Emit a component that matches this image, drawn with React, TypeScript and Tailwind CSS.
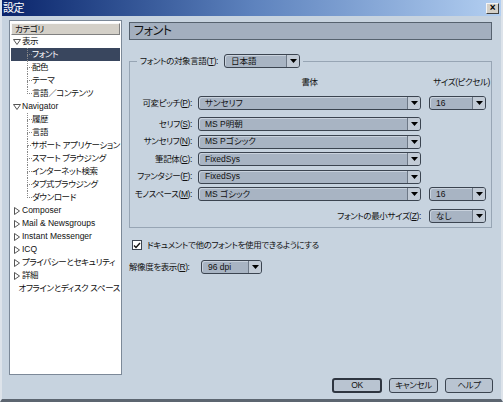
const FONT = "[font-family:'Liberation_Sans','Noto_Sans_CJK_JP',sans-serif] [font-feature-settings:'palt'] tracking-[-0.4px]";

function Arrow() {
  return (
    <svg width="7" height="4" viewBox="0 0 7 4" aria-hidden="true">
      <polygon points="0,0 7,0 3.5,4" fill="#000" />
    </svg>
  );
}

function Combo({ text, width }: { text: string; width: string }) {
  return (
    <div
      className={`${width} h-[14px] flex shrink-0 rounded-[3px] border border-[#3b4450] bg-[#a8b4c3] shadow-[inset_1px_1px_0_#c9d2dd] overflow-hidden`}
    >
      <div className="flex-1 flex items-center pl-[6px] text-[8.5px] text-[#111] whitespace-nowrap leading-none tracking-normal">
        {text}
      </div>
      <div className="w-[13px] flex items-center justify-center border-l border-[#6d7886] bg-[#c2cbd6]">
        <Arrow />
      </div>
    </div>
  );
}

function Btn({ label, width, primary }: { label: string; width: string; primary?: boolean }) {
  return (
    <div
      className={`${width} h-[15px] flex items-center justify-center rounded-[3px] bg-[#b9c4d1] text-[8.5px] leading-none text-[#111] ${
        primary ? "border-2 border-[#2e3540]" : "border border-[#3b4450]"
      }`}
    >
      {label}
    </div>
  );
}

function Tri({ open }: { open: boolean }) {
  return open ? (
    <svg width="8" height="6" viewBox="0 0 8 6" aria-hidden="true">
      <polygon points="0.5,0.5 7.5,0.5 4,5.5" fill="#fff" stroke="#555" strokeWidth="1" />
    </svg>
  ) : (
    <svg width="6" height="8" viewBox="0 0 6 8" aria-hidden="true">
      <polygon points="0.5,0.5 5.5,4 0.5,7.5" fill="#fff" stroke="#555" strokeWidth="1" />
    </svg>
  );
}

function TopItem({ label, open, plain, latin }: { label: string; open?: boolean; plain?: boolean; latin?: boolean }) {
  return (
    <div className="h-[13px] flex items-center pl-[1px] text-[8.5px] leading-none text-[#111] whitespace-nowrap">
      <div className="w-[9px] flex items-center justify-center">{plain ? null : <Tri open={!!open} />}</div>
      <span className={`ml-[1px] ${latin ? "tracking-normal" : ""}`}>{label}</span>
    </div>
  );
}

function Child({ label, last, selected }: { label: string; last?: boolean; selected?: boolean }) {
  return (
    <div
      className={`h-[13px] flex items-stretch text-[8.5px] leading-none whitespace-nowrap ${
        selected ? "bg-[#39465e] text-white" : "text-[#111]"
      }`}
    >
      <div className="ml-[16px] w-[5px] flex flex-col">
        <div className="flex-1 border-l border-b border-dotted border-[#888]" />
        <div className={`flex-1 ${last ? "" : "border-l border-dotted border-[#888]"}`} />
      </div>
      <span className="self-center">{label}</span>
    </div>
  );
}

function Label({ text, mn }: { text: string; mn: string }) {
  return (
    <>
      {text}(<u>{mn}</u>):
    </>
  );
}

function FontRow({ label, mn, value, size }: { label: string; mn: string; value: string; size?: string }) {
  return (
    <div className="h-[14px] flex items-center">
      <div className="w-[62px] text-right text-[8.5px] leading-none text-[#111] whitespace-nowrap">
        <Label text={label} mn={mn} />
      </div>
      <div className="ml-[6px]">
        <Combo text={value} width="w-[223px]" />
      </div>
      {size ? (
        <div className="ml-[8px]">
          <Combo text={size} width="w-[57px]" />
        </div>
      ) : null}
    </div>
  );
}

export default function App() {
  return (
    <div className={`w-[503px] h-[402px] flex flex-col bg-[#c7d3df] border-l-2 border-r-2 border-b-[3px] border-l-[#dde3ea] border-r-[#dde3ea] border-b-[#5c6570] ${FONT}`}>
      {/* title bar */}
      <div className="h-[16px] shrink-0 flex items-center justify-between bg-gradient-to-r from-[#0b246b] via-[#5d82bd] to-[#b3cff1] pl-[1px] pr-[2px]">
        <span className="text-[11px] leading-none text-white">設定</span>
        <div className="w-[13px] h-[11px] flex items-center justify-center bg-[#d4d0c8] border border-[#f4f4f4] border-r-[#404040] border-b-[#404040] text-[10px] leading-none font-bold text-black">
          ×
        </div>
      </div>

      <div className="flex-1 flex flex-col pl-[7px] pr-[8px] pt-[4px]">
        <div className="flex gap-[7px] h-[355px]">
          {/* category tree */}
          <div className="w-[113px] shrink-0 bg-white border border-[#7c8998] px-[1px] pt-[2px] flex flex-col overflow-hidden">
            <div className="h-[12px] flex items-center pl-[3px] bg-[#d4d0c8] border border-[#f8f8f8] border-r-[#808080] border-b-[#808080] text-[8.5px] leading-none text-[#111]">
              カテゴリ
            </div>
            <TopItem label="表示" open />
            <Child label="フォント" selected />
            <Child label="配色" />
            <Child label="テーマ" />
            <Child label="言語／コンテンツ" last />
            <TopItem label="Navigator" open latin />
            <Child label="履歴" />
            <Child label="言語" />
            <Child label="サポート アプリケーション" />
            <Child label="スマート ブラウジング" />
            <Child label="インターネット検索" />
            <Child label="タブ式ブラウジング" />
            <Child label="ダウンロード" last />
            <TopItem label="Composer" latin />
            <TopItem label="Mail & Newsgroups" latin />
            <TopItem label="Instant Messenger" latin />
            <TopItem label="ICQ" latin />
            <TopItem label="プライバシーとセキュリティ" />
            <TopItem label="詳細" />
            <TopItem label="オフラインとディスク スペース" plain />
          </div>

          {/* right panel */}
          <div className="w-[363px] flex flex-col">
            <div className="mt-[2px] h-[18px] flex items-center pl-[4px] bg-[#a3afbf] border border-[#56626f] text-[12px] leading-none text-[#111]">
              フォント
            </div>

            <fieldset className="mt-[14px] border border-[#97a5b4] pb-[4px]">
              <legend className="ml-[7px] px-[3px] flex items-center">
                <span className="text-[8.5px] leading-none text-[#111] whitespace-nowrap">
                  <Label text="フォントの対象言語" mn="T" />
                </span>
                <div className="ml-[6px]">
                  <Combo text="日本語" width="w-[76px]" />
                </div>
              </legend>

              <div className="mt-[8px] h-[12px] flex items-center text-[8.5px] leading-none text-[#111]">
                <div className="w-[68px]" />
                <div className="w-[223px] text-center">書体</div>
                <div className="flex-1 text-right pr-[1px] whitespace-nowrap">サイズ(ピクセル)</div>
              </div>

              <div className="mt-[8px] flex flex-col">
                <FontRow label="可変ピッチ" mn="P" value="サンセリフ" size="16" />
                <div className="mt-[7px] flex flex-col gap-[3.5px]">
                  <FontRow label="セリフ" mn="S" value="MS P明朝" />
                  <FontRow label="サンセリフ" mn="N" value="MS Pゴシック" />
                  <FontRow label="筆記体" mn="C" value="FixedSys" />
                  <FontRow label="ファンタジー" mn="F" value="FixedSys" />
                  <FontRow label="モノスペース" mn="M" value="MS ゴシック" size="16" />
                </div>
              </div>

              <div className="mt-[8px] h-[14px] flex items-center justify-end pr-[5px]">
                <span className="text-[8.5px] leading-none text-[#111] whitespace-nowrap">
                  <Label text="フォントの最小サイズ" mn="Z" />
                </span>
                <div className="ml-[8px]">
                  <Combo text="なし" width="w-[57px]" />
                </div>
              </div>
            </fieldset>

            <div className="mt-[11px] h-[12px] flex items-center pl-[3px]">
              <div className="w-[10px] h-[10px] flex items-center justify-center bg-white border border-[#3b4450]">
                <svg width="8" height="7" viewBox="0 0 8 7" aria-hidden="true">
                  <polyline points="1,3.5 3,5.5 7,1" fill="none" stroke="#111" strokeWidth="1.4" />
                </svg>
              </div>
              <span className="ml-[5px] text-[8.5px] leading-none text-[#111] whitespace-nowrap">
                ドキュメントで他のフォントを使用できるようにする
              </span>
            </div>

            <div className="mt-[9px] h-[14px] flex items-center">
              <span className="w-[72px] text-[8.5px] leading-none text-[#111] whitespace-nowrap">
                <Label text="解像度を表示" mn="R" />
              </span>
              <Combo text="96 dpi" width="w-[61px]" />
            </div>
          </div>
        </div>

        <div className="mt-[3px] flex justify-end gap-[7px]">
          <Btn label="OK" width="w-[50px]" primary />
          <Btn label="キャンセル" width="w-[49px]" />
          <Btn label="ヘルプ" width="w-[48px]" />
        </div>
      </div>
    </div>
  );
}
